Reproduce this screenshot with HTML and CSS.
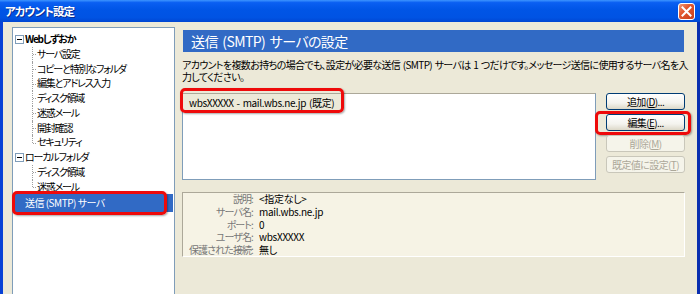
FILE: index.html
```html
<!DOCTYPE html>
<html>

<head>
    <meta charset="utf-8">
    <title>アカウント設定</title>
    <link rel="stylesheet" href="styles.css">
</head>

<body>
    <div class="window">
        <div class="titlebar">
            <span class="title">アカウント設定</span>
            <span class="close">
                <svg width="11" height="11" viewBox="0 0 11 11">
                    <path d="M1.5 1.5 L9.5 9.5 M9.5 1.5 L1.5 9.5" stroke="#fff" stroke-width="2" stroke-linecap="square" fill="none"/>
                </svg>
            </span>
        </div>

        <div class="frame">
            <!-- account tree -->
            <div class="tree">
                <div class="node root"><span class="toggle"></span><b>Webしずおか</b></div>
                <div class="node child">サーバ設定</div>
                <div class="node child">コピーと特別なフォルダ</div>
                <div class="node child">編集とアドレス入力</div>
                <div class="node child">ディスク領域</div>
                <div class="node child">迷惑メール</div>
                <div class="node child">開封確認</div>
                <div class="node child last">セキュリティ</div>
                <div class="node root"><span class="toggle"></span>ローカルフォルダ</div>
                <div class="node child">ディスク領域</div>
                <div class="node child last">迷惑メール</div>
                <div class="node leaf selected">送信 (SMTP) サーバ<span class="mark tree-mark"></span></div>
            </div>

            <div class="main">
                <div class="heading">送信 (SMTP) サーバの設定</div>
                <p class="desc">アカウントを複数お持ちの場合でも、設定が必要な送信 (SMTP) サーバは 1 つだけです。メッセージ送信に使用するサーバ名を入<br>力してください。</p>

                <div class="servers">
                    <div class="list">
                        <div class="item">wbsXXXXX - mail.wbs.ne.jp (既定)<span class="mark item-mark"></span></div>
                    </div>
                    <div class="buttons">
                        <button class="btn">追加(<u>D</u>)...</button>
                        <button class="btn">編集(<u>E</u>)...<span class="mark btn-mark"></span></button>
                        <button class="btn" disabled>削除(<u>M</u>)</button>
                        <button class="btn" disabled>既定値に設定(<u>T</u>)</button>
                    </div>
                </div>

                <!-- selected server info -->
                <div class="details">
                    <span class="label">説明:</span><span class="value">&lt;指定なし&gt;</span>
                    <span class="label">サーバ名:</span><span class="value">mail.wbs.ne.jp</span>
                    <span class="label">ポート:</span><span class="value">0</span>
                    <span class="label">ユーザ名:</span><span class="value">wbsXXXXX</span>
                    <span class="label">保護された接続:</span><span class="value">無し</span>
                </div>
            </div>
        </div>
    </div>
</body>

</html>
```

FILE: styles.css
```css
* {
    box-sizing: border-box;
}

body {
    margin: 0;
    font-family: "Noto Sans CJK JP", sans-serif;
    font-feature-settings: "palt";
    font-size: 10px;
    color: #000;
    background-color: #ece9d8;
}

.window {
    width: 700px;
    height: 294px;
    display: flex;
    flex-direction: column;
    overflow: hidden;
}

.titlebar {
    height: 22px;
    flex: none;
    display: flex;
    align-items: center;
    justify-content: space-between;
    padding: 0 5px 0 5px;
    background: linear-gradient(#3d95ff 0%, #0a5ff2 12%, #0055e6 45%, #0053e3 80%, #0046d2 100%);
    color: #fff;
}

.title {
    font-size: 11.5px;
    font-weight: bold;
    letter-spacing: -0.9px;
    text-shadow: 1px 1px 0 #0a2d8f;
}

.close {
    width: 17px;
    height: 17px;
    display: flex;
    align-items: center;
    justify-content: center;
    border: 1px solid #fff;
    border-radius: 3px;
    background: linear-gradient(135deg, #f09a7a 0%, #e2572e 40%, #c8401c 100%);
}

.frame {
    flex: 1;
    display: flex;
    gap: 7px;
    padding: 5px 11px 0 9px;
    border-left: 3px solid #0842d6;
    border-right: 3px solid #0a2fb0;
}

/* tree */
.tree {
    width: 163px;
    flex: none;
    height: 290px;
    padding-top: 4px;
    background: #fff;
    border: 1px solid #7f9db9;
    letter-spacing: -1.2px;
}

.node {
    position: relative;
    height: 14.75px;
    line-height: 14.75px;
    white-space: nowrap;
}

.node.root,
.node.leaf {
    padding-left: 12px;
}

.node b {
    font-weight: bold;
}

.toggle {
    position: absolute;
    left: 2px;
    top: 3px;
    width: 9px;
    height: 9px;
    border: 1px solid #7f9db9;
    background: #fff;
}

.toggle::after {
    content: "";
    position: absolute;
    left: 1px;
    top: 3px;
    width: 5px;
    height: 1px;
    background: #000;
}

.node.child {
    padding-left: 24px;
}

.node.child::before {
    content: "";
    position: absolute;
    left: 19px;
    top: 0;
    height: 100%;
    border-left: 1px dotted #a0a0a0;
}

.node.child.last::before {
    height: 50%;
}

.node.child::after {
    content: "";
    position: absolute;
    left: 20px;
    top: 50%;
    width: 3px;
    border-top: 1px dotted #a0a0a0;
}

.node.selected {
    height: 18px;
    line-height: 18px;
    margin-right: 1px;
    background: #316ac5;
    color: #fff;
    letter-spacing: -0.5px;
}

/* red annotation boxes */
.mark {
    position: absolute;
    border: 3px solid #ee0a0a;
    border-radius: 5px;
    box-shadow: 1px 1px 2px rgba(0, 0, 0, 0.35);
    pointer-events: none;
}

.tree-mark {
    left: -1px;
    top: -3px;
    width: 155px;
    height: 24px;
}

.item-mark {
    left: -3px;
    top: -6px;
    width: 164px;
    height: 25px;
}

.btn-mark {
    left: -12px;
    top: -4px;
    width: 96px;
    height: 24px;
}

/* right side */
.main {
    width: 504px;
    flex: none;
    display: flex;
    flex-direction: column;
}

.heading {
    height: 22px;
    margin: 3px 2px 0 1px;
    padding-left: 8px;
    background: #316ac5;
    color: #fff;
    font-size: 14px;
    line-height: 22px;
    letter-spacing: -0.6px;
    word-spacing: 2px;
}

.desc {
    margin: 7px 0 0 0;
    line-height: 12px;
    letter-spacing: -0.65px;
    word-spacing: 1px;
    white-space: nowrap;
}

.servers {
    display: flex;
    margin-top: 10px;
    gap: 10px;
}

.list {
    width: 414px;
    height: 87px;
    background: #fff;
    border: 1px solid #7f9db9;
    border-top-color: #aca899;
}

.item {
    position: relative;
    display: inline-block;
    width: 159px;
    height: 17px;
    line-height: 17px;
    padding: 0 0 0 6px;
    background: #ece9d8;
    letter-spacing: -0.35px;
    word-spacing: 1px;
    white-space: nowrap;
}

.buttons {
    width: 79px;
    display: flex;
    flex-direction: column;
    gap: 4px;
}

.btn {
    position: relative;
    height: 17px;
    padding: 0;
    font-family: inherit;
    font-feature-settings: "palt";
    font-size: 10px;
    line-height: 15px;
    letter-spacing: -0.6px;
    color: #000;
    border: 1px solid #003c74;
    border-radius: 3px;
    background: linear-gradient(#ffffff 0%, #f4f3ee 60%, #dcd8c8 100%);
}

.btn:disabled {
    color: #aca899;
    border-color: #c9c7ba;
    background: #f5f4ea;
}

.details {
    margin-top: 12px;
    margin-right: 1px;
    height: 65px;
    display: grid;
    grid-template-columns: 70px 1fr;
    column-gap: 6px;
    grid-auto-rows: 12.8px;
    background: #f6f3e5;
    border: 1px solid;
    border-color: #aca899 #fff #fff #aca899;
    line-height: 12.8px;
}

.label {
    text-align: right;
    color: #777;
    white-space: nowrap;
    letter-spacing: -0.9px;
}

.value {
    white-space: nowrap;
    letter-spacing: -0.3px;
}
```
